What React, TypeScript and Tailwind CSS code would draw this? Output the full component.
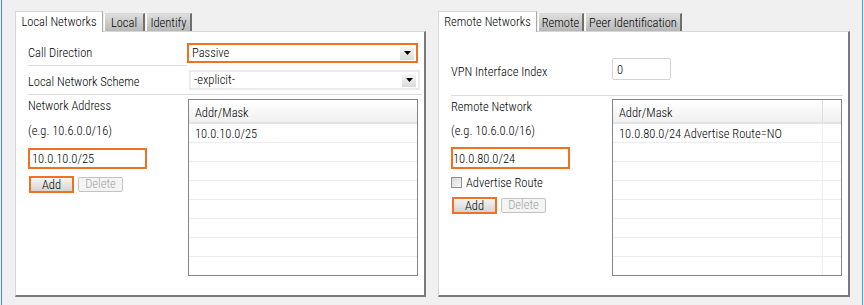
import React from "react";

function Arrow() {
  return (
    <div className="w-[14px] h-[13px] mr-[2px] flex items-center justify-center bg-gradient-to-b from-[#f6f6f6] to-[#d9d9d9]">
      <svg width="7" height="4" viewBox="0 0 7 4">
        <polygon points="0,0 7,0 3.5,4" fill="#000" />
      </svg>
    </div>
  );
}

function Select({ value, orange }: { value: string; orange?: boolean }) {
  return (
    <div
      className={`flex items-center h-[20px] w-[231px] bg-white border-2 ${
        orange ? "border-[#f37021]" : "border-[#ebebeb]"
      }`}
    >
      <span className="flex-1 pl-[3px] leading-none">{value}</span>
      <Arrow />
    </div>
  );
}

function OrangeAdd() {
  return (
    <div className="border-2 border-[#f37021] w-[45px] h-[17px] flex">
      <div className="flex-1 bg-gradient-to-b from-[#f3f3f3] to-[#d4d4d4] border-t border-t-[#ffffff] flex items-center justify-center leading-none">
        Add
      </div>
    </div>
  );
}

function DeleteBtn() {
  return (
    <div className="ml-[4px] w-[45px] h-[15px] border border-[#c2c2c2] rounded-[2px] bg-[#f4f4f4] text-[#a3a3a3] flex items-center justify-center leading-none">
      Delete
    </div>
  );
}

function List({ text, divider }: { text: string; divider?: boolean }) {
  const rows = [text, "", "", "", "", "", "", ""];
  return (
    <div className="w-[230px] h-[177px] border border-[#848484] bg-white flex flex-col overflow-hidden">
      <div className="flex h-[24px] shrink-0 bg-gradient-to-b from-white to-[#f0f0f0] border-b-2 border-[#e3e3e3]">
        <div className="flex-1 pl-[6px] flex items-center pt-[2px]">Addr/Mask</div>
        {divider && <div className="w-[19px] border-l border-[#dedede]" />}
      </div>
      {rows.map((r, i) => (
        <div key={i} className="flex h-[19px] shrink-0 border-b border-[#ececec]">
          <div className="flex-1 pl-[6px] flex items-center whitespace-nowrap">{r}</div>
          {divider && <div className="w-[19px] border-l border-[#efefef]" />}
        </div>
      ))}
    </div>
  );
}

function Tabs({ tabs }: { tabs: { label: string; w: string }[] }) {
  return (
    <div className="flex items-end h-[20px]">
      {tabs.map((t, i) =>
        i === 0 ? (
          <div
            key={i}
            className={`${t.w} h-[21px] -mb-px relative z-10 bg-white border-l border-t border-r border-[#d6d6d6] border-r-[#a8a8a8] flex items-center justify-center pb-[1px] whitespace-nowrap`}
          >
            {t.label}
          </div>
        ) : (
          <div
            key={i}
            className={`${t.w} h-[18px] ml-px bg-gradient-to-b from-[#dedede] to-[#b8b8b8] border-l border-t border-l-white border-t-[#d8d8d8] border-r-2 border-r-[#6f6f6f] flex items-center justify-center whitespace-nowrap`}
          >
            {t.label}
          </div>
        )
      )}
    </div>
  );
}

const panelCls =
  "h-[266px] bg-white border-l border-t border-l-[#d6d6d6] border-t-[#d6d6d6] border-r-2 border-b-2 border-r-[#7a7a7a] border-b-[#7a7a7a] flex flex-col";

export default function App() {
  return (
    <div className="w-[864px] h-[305px] bg-[#f0f0f0] flex font-['Roboto_Condensed','Liberation_Sans',Arial,sans-serif] font-light text-[12.5px] text-black leading-[15px] overflow-hidden">
      <div className="ml-px w-px h-full bg-[#4d88cf]" />
      <div className="ml-[13px] pt-[11px] w-[411px] flex flex-col">
        <Tabs
          tabs={[
            { label: "Local Networks", w: "w-[88px]" },
            { label: "Local", w: "w-[41px]" },
            { label: "Identify", w: "w-[46px]" },
          ]}
        />
        <div className={panelCls}>
          <div className="pl-[12px] pr-[2px] flex flex-col">
            <div className="flex h-[34px]">
              <div className="w-[159px] border-b border-[#dcdcdc] flex items-center pt-[8px]">Call Direction</div>
              <div className="mt-[11px]">
                <Select value="Passive" orange />
              </div>
            </div>
            <div className="flex h-[29px] border-b border-[#dcdcdc]">
              <div className="w-[161px] flex items-center pt-[3px]">Local Network Scheme</div>
              <div className="mt-[4px]">
                <Select value="-explicit-" />
              </div>
            </div>
            <div className="flex">
              <div className="w-[160px] flex flex-col">
                <div className="pt-[3px]">Network Address</div>
                <div className="mt-[10px]">(e.g. 10.6.0.0/16)</div>
                <div className="mt-[10px] w-[119px] h-[21px] border-2 border-[#f37021] bg-white pl-[2px] flex items-center">
                  10.0.10.0/25
                </div>
                <div className="mt-[7px] ml-px flex items-center">
                  <OrangeAdd />
                  <DeleteBtn />
                </div>
              </div>
              <div className="mt-[4px]">
                <List text="10.0.10.0/25" />
              </div>
            </div>
          </div>
        </div>
      </div>
      <div className="ml-[12px] pt-[11px] w-[412px] flex flex-col">
        <Tabs
          tabs={[
            { label: "Remote Networks", w: "w-[99px]" },
            { label: "Remote", w: "w-[46px]" },
            { label: "Peer Identification", w: "w-[97px]" },
          ]}
        />
        <div className={panelCls}>
          <div className="pl-[12px] pr-[5px] flex flex-col">
            <div className="flex h-[64px] border-b border-[#dcdcdc]">
              <div className="w-[161px] flex items-center pt-[15px]">VPN Interface Index</div>
              <div className="mt-[26px] w-[59px] h-[22px] border border-[#d3d3d3] rounded-[2px] bg-white pl-[4px] flex items-center">
                0
              </div>
            </div>
            <div className="flex">
              <div className="w-[161px] flex flex-col">
                <div className="pt-[3px]">Remote Network</div>
                <div className="mt-[9px]">(e.g. 10.6.0.0/16)</div>
                <div className="mt-[9px] w-[119px] h-[22px] border-2 border-[#f37021] bg-white flex items-center">
                  10.0.80.0/24
                </div>
                <div className="mt-[8px] flex items-center h-[11px]">
                  <div className="w-[11px] h-[11px] border border-[#8e8f8f] bg-gradient-to-br from-[#d8d8d8] to-[#f8f8f8]" />
                  <span className="ml-[4px]">Advertise Route</span>
                </div>
                <div className="mt-[9px] ml-px flex items-center">
                  <OrangeAdd />
                  <DeleteBtn />
                </div>
              </div>
              <div className="mt-[3px]">
                <List text="10.0.80.0/24 Advertise Route=NO" divider />
              </div>
            </div>
          </div>
        </div>
      </div>
      <div className="ml-[12px] w-px h-full bg-[#39a6f0]" />
    </div>
  );
}
